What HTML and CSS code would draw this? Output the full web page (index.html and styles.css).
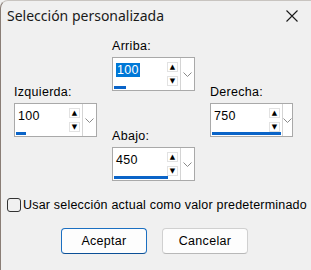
FILE: index.html
```html
<!DOCTYPE html>
<html lang="es">
<head>
    <meta charset="UTF-8">
    <meta name="viewport" content="width=device-width, initial-scale=1.0">
    <title>Selección personalizada</title>
    <link rel="stylesheet" href="styles.css">
</head>
<body>

<div class="dialog">
    <div class="titlebar">
        <span class="title">Selección personalizada</span>
        <svg class="close" width="12" height="12" viewBox="0 0 12 12">
            <path d="M0.5 0.5 L11.5 11.5 M11.5 0.5 L0.5 11.5" stroke="#1a1a1a" stroke-width="1.1" fill="none"/>
        </svg>
    </div>

    <div class="fields">
        <div class="col side">
            <div class="field">
                <label>Izquierda:</label>
                <div class="spin">
                    <div class="main">
                        <div class="row">
                            <span class="value">100</span>
                            <div class="arrows">
                                <span class="arrow">&#9650;</span>
                                <span class="arrow">&#9660;</span>
                            </div>
                        </div>
                        <div class="track"><div class="bar" style="width: 10px;"></div></div>
                    </div>
                    <div class="drop">
                        <svg width="9" height="5" viewBox="0 0 9 5"><path d="M0.5 0.5 L4.5 4.5 L8.5 0.5" stroke="#8a8a8a" fill="none"/></svg>
                    </div>
                </div>
            </div>
        </div>

        <div class="col middle">
            <div class="field">
                <label>Arriba:</label>
                <div class="spin">
                    <div class="main">
                        <div class="row">
                            <span class="value"><span class="sel">100</span></span>
                            <div class="arrows">
                                <span class="arrow">&#9650;</span>
                                <span class="arrow">&#9660;</span>
                            </div>
                        </div>
                        <div class="track"><div class="bar" style="width: 12px;"></div></div>
                    </div>
                    <div class="drop">
                        <svg width="9" height="5" viewBox="0 0 9 5"><path d="M0.5 0.5 L4.5 4.5 L8.5 0.5" stroke="#8a8a8a" fill="none"/></svg>
                    </div>
                </div>
            </div>

            <div class="field lower">
                <label>Abajo:</label>
                <div class="spin">
                    <div class="main">
                        <div class="row">
                            <span class="value">450</span>
                            <div class="arrows">
                                <span class="arrow">&#9650;</span>
                                <span class="arrow">&#9660;</span>
                            </div>
                        </div>
                        <div class="track"><div class="bar" style="width: 54px;"></div></div>
                    </div>
                    <div class="drop">
                        <svg width="9" height="5" viewBox="0 0 9 5"><path d="M0.5 0.5 L4.5 4.5 L8.5 0.5" stroke="#8a8a8a" fill="none"/></svg>
                    </div>
                </div>
            </div>
        </div>

        <div class="col side">
            <div class="field">
                <label>Derecha:</label>
                <div class="spin">
                    <div class="main">
                        <div class="row">
                            <span class="value">750</span>
                            <div class="arrows">
                                <span class="arrow">&#9650;</span>
                                <span class="arrow">&#9660;</span>
                            </div>
                        </div>
                        <div class="track"><div class="bar" style="width: 69px;"></div></div>
                    </div>
                    <div class="drop">
                        <svg width="9" height="5" viewBox="0 0 9 5"><path d="M0.5 0.5 L4.5 4.5 L8.5 0.5" stroke="#8a8a8a" fill="none"/></svg>
                    </div>
                </div>
            </div>
        </div>
    </div>

    <label class="check">
        <span class="box"></span>
        <span>Usar selección actual como valor predeterminado</span>
    </label>

    <div class="buttons">
        <button class="primary">Aceptar</button>
        <button>Cancelar</button>
    </div>
</div>

</body>
</html>
```

FILE: styles.css
```css
body {
    margin: 0;
    padding: 0;
    background-color: #f0f0f0;
    font-family: "Liberation Sans", Arial, sans-serif;
    font-size: 12.5px;
    color: #000;
}
.dialog {
    width: 310px;
    height: 269px;
    overflow: hidden;
    background-color: #f0f0f0;
    border-left: 1px solid #8a7e76;
    border-top: 1px solid #c8c4c0;
    border-top-left-radius: 8px;
}
.titlebar {
    height: 29px;
    display: flex;
    align-items: center;
    justify-content: space-between;
    padding: 0 13px 0 6px;
}
.title {
    font-family: "Noto Sans", sans-serif;
    font-size: 14px;
    color: #1a1a1a;
}
.fields {
    display: flex;
    gap: 15px;
    padding: 9px 0 0 13px;
}
.col {
    width: 83px;
}
.side {
    padding-top: 46px;
}
.field label {
    display: block;
    height: 14px;
    line-height: 14px;
    margin-bottom: 4px;
    letter-spacing: 0.3px;
}
.field.lower {
    margin-top: 38px;
}
.spin {
    display: flex;
    height: 32px;
    border: 1px solid #a9a9a9;
    background-color: #fff;
}
.main {
    flex: 1;
    display: flex;
    flex-direction: column;
    padding: 0 1px 1px 1px;
}
.row {
    flex: 1;
    display: flex;
    justify-content: space-between;
}
.value {
    padding: 5px 0 0 2px;
    font-size: 12.5px;
    line-height: 14px;
    letter-spacing: 0.3px;
}
.sel {
    background-color: #0078d7;
    color: #fff;
    padding: 0 1px;
}
.arrows {
    display: flex;
    flex-direction: column;
    gap: 4px;
    padding: 4px 1px 0 0;
}
.arrow {
    width: 9px;
    height: 8px;
    border: 1px solid #e2e2e2;
    font-family: "DejaVu Sans", sans-serif;
    font-size: 7px;
    line-height: 8px;
    text-align: center;
    color: #000;
}
.track {
    height: 3px;
}
.bar {
    height: 3px;
    background-color: #0a64c8;
}
.drop {
    width: 13px;
    border-left: 1px solid #d4d4d4;
    display: flex;
    align-items: center;
    justify-content: center;
}
.check {
    display: flex;
    align-items: center;
    gap: 2px;
    margin: 17px 0 0 6px;
    white-space: nowrap;
    letter-spacing: 0.2px;
}
.check .box {
    width: 12px;
    height: 12px;
    border: 1px solid #333;
    border-radius: 3px;
    background-color: #f0f0f0;
}
.buttons {
    display: flex;
    gap: 15px;
    margin: 16px 0 0 60px;
}
button {
    width: 86px;
    height: 26px;
    font-family: "Liberation Sans", Arial, sans-serif;
    font-size: 12.5px;
    letter-spacing: 0.3px;
    color: #000;
    background-color: #fdfdfd;
    border: 1px solid #d0d0d0;
    border-bottom-color: #b8b8b8;
    border-radius: 4px;
    padding: 0;
}
button.primary {
    border-color: #1b6fc1;
    border-bottom-color: #0b4f96;
}
```
